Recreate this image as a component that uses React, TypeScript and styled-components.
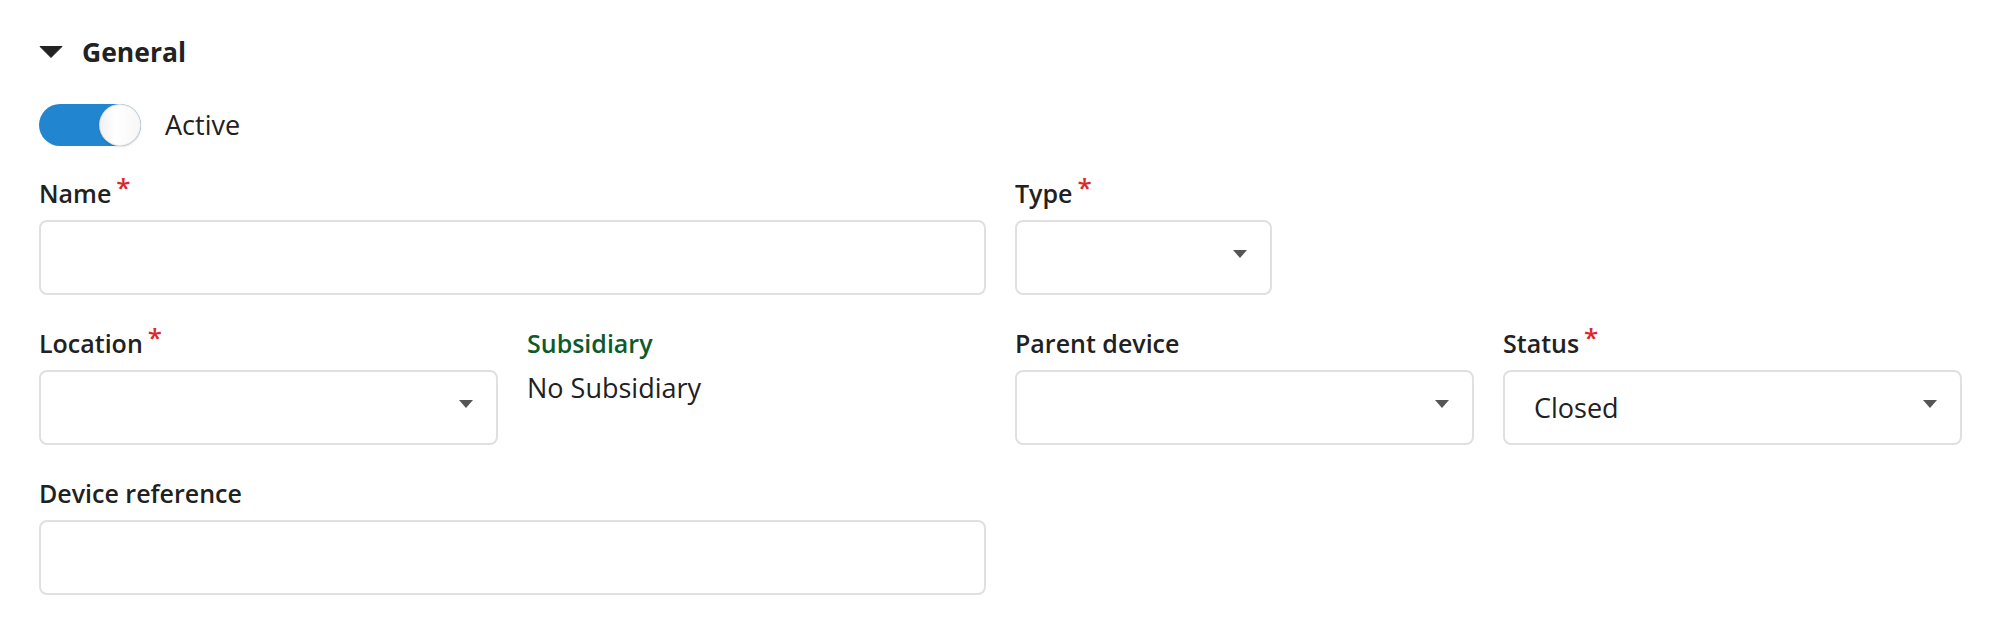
import React from 'react'
import styled, { createGlobalStyle } from 'styled-components'

const GlobalStyle = createGlobalStyle`
  body {
    margin: 0;
    background: #fff;
    font-family: "Open Sans", "Noto Sans", Arial, sans-serif;
    color: #212121;
  }
`

const App: React.FC = () => {
  return (
    <>
      <GlobalStyle />
      <Page>
        <SectionTitle>
          <svg width="24" height="12" viewBox="0 0 24 12">
            <polygon points="1,0.5 23,0.5 12,11.5" fill="#222" stroke="#222" strokeWidth="1" strokeLinejoin="round" />
          </svg>
          <span>General</span>
        </SectionTitle>

        <ToggleRow>
          <Toggle>
            <Knob />
          </Toggle>
          <ToggleLabel>Active</ToggleLabel>
        </ToggleRow>

        <FormGrid>
          <Field $start={1} $span={2}>
            <Label>Name<Req>*</Req></Label>
            <Input />
          </Field>
          <Field $start={3} $span={1}>
            <Label>Type<Req>*</Req></Label>
            <Select $width="257px">
              <SelectValue />
              <Caret />
            </Select>
          </Field>

          <Field $start={1} $span={1}>
            <Label>Location<Req>*</Req></Label>
            <Select>
              <SelectValue />
              <Caret />
            </Select>
          </Field>
          <Field $start={2} $span={1}>
            <Label $accent>Subsidiary</Label>
            <Value>No Subsidiary</Value>
          </Field>
          <Field $start={3} $span={1}>
            <Label>Parent device</Label>
            <Select>
              <SelectValue />
              <Caret />
            </Select>
          </Field>
          <Field $start={4} $span={1}>
            <Label>Status<Req>*</Req></Label>
            <Select>
              <SelectValue>Closed</SelectValue>
              <Caret />
            </Select>
          </Field>

          <Field $start={1} $span={2}>
            <Label>Device reference</Label>
            <Input />
          </Field>
        </FormGrid>
      </Page>
    </>
  )
}

export default App

const Caret: React.FC = () => (
  <CaretIcon width="14" height="8" viewBox="0 0 14 8">
    <polygon points="0,0 14,0 7,8" fill="#555" />
  </CaretIcon>
)

const Page = styled.div`
  padding: 34px 27px 40px 39px;
  display: flex;
  flex-direction: column;
`

const SectionTitle = styled.div`
  display: flex;
  align-items: center;
  gap: 19px;
  margin-bottom: 34px;
  font-size: 26.5px;
  font-weight: 700;
  line-height: 36px;
  color: #222;
`

const ToggleRow = styled.div`
  display: flex;
  align-items: center;
  gap: 24px;
  margin-bottom: 33px;
`

const Toggle = styled.div`
  width: 102px;
  height: 42px;
  border-radius: 21px;
  background: #2185d0;
  display: flex;
  justify-content: flex-end;
`

const Knob = styled.div`
  width: 42px;
  height: 42px;
  border-radius: 50%;
  background: #fff linear-gradient(90deg, #f0f0f0, #ffffff 40%, #f6f6f6);
  box-shadow: 0 1px 2px 0 rgba(34, 36, 38, 0.15), inset 0 0 0 1px rgba(34, 36, 38, 0.12);
`

const ToggleLabel = styled.span`
  font-size: 27px;
  line-height: 36px;
  color: #212121;
`

const FormGrid = styled.div`
  display: grid;
  grid-template-columns: repeat(4, 1fr);
  column-gap: 29px;
  row-gap: 34px;
`

const Field = styled.div<{ $start: number; $span: number }>`
  grid-column: ${p => p.$start} / span ${p => p.$span};
  display: flex;
  flex-direction: column;
  align-items: flex-start;
`

const Label = styled.label<{ $accent?: boolean }>`
  font-size: 25px;
  font-weight: 600;
  line-height: 28px;
  margin-bottom: 13px;
  color: ${p => (p.$accent ? '#0d5a2c' : '#212121')};
`

const Req = styled.span`
  position: relative;
  top: -6px;
  margin-left: 5px;
  color: #db2828;
  font-size: 26px;
`

const Input = styled.div`
  box-sizing: border-box;
  width: 100%;
  height: 75px;
  border: 2px solid #e0e0e0;
  border-radius: 8px;
  background: #fff;
`

const Select = styled.div<{ $width?: string }>`
  box-sizing: border-box;
  width: ${p => p.$width || '100%'};
  height: 75px;
  border: 2px solid #e0e0e0;
  border-radius: 8px;
  background: #fff;
  display: flex;
  align-items: center;
  justify-content: space-between;
  padding: 0 23px 0 29px;
`

const SelectValue = styled.span`
  font-size: 27px;
  line-height: 36px;
  color: #212121;
`

const CaretIcon = styled.svg`
  flex-shrink: 0;
  margin-bottom: 8px;
`

const Value = styled.div`
  font-size: 27px;
  line-height: 36px;
  color: #212121;
`
